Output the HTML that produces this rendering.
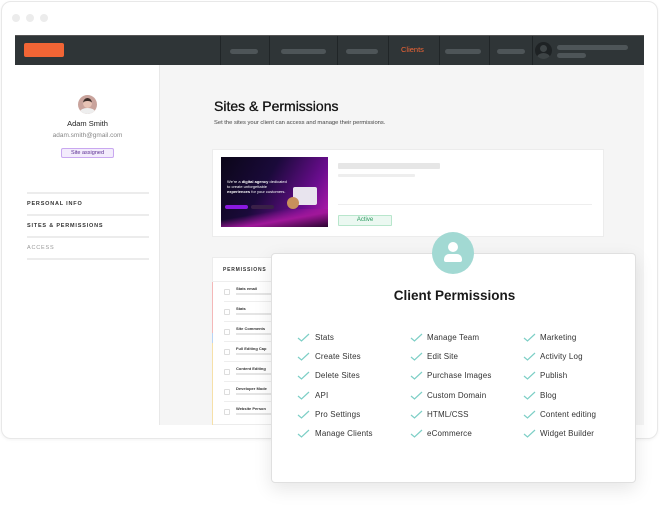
<!DOCTYPE html>
<html><head><meta charset="utf-8"><style>
*{margin:0;padding:0;box-sizing:border-box}
body{width:660px;height:507px;background:#fff;font-family:"Liberation Sans",sans-serif;position:relative;overflow:hidden}
.a{position:absolute}
.frame{left:1px;top:1px;width:657px;height:438px;border:1px solid #e8e8e8;border-radius:10px;background:#fff;box-shadow:0 1px 3px rgba(0,0,0,.05)}
.dot{width:8px;height:8px;border-radius:50%;background:#ececec;top:14px}
.nav{left:15px;top:35px;width:629px;height:30px;background:#2f3537;border-top:1px solid #555}
.sep{top:0;width:1px;height:30px;background:#202527}
.pill{height:5px;border-radius:3px;background:#4e5558;top:13px}
.side{left:15px;top:65px;width:145px;height:360px;background:#fff;border-right:1px solid #e8e8e8}
.main{left:160px;top:65px;width:484px;height:360px;background:#f5f5f5}
.hl{left:27px;width:122px;height:2px;background:#ececec}
.lab{left:27px;font-size:5.5px;font-weight:bold;letter-spacing:.8px;color:#333}
.card{background:#fff;border:1px solid #ececec}
.bar{background:#e6e6e6;border-radius:1px}
.pr{position:absolute;left:12px;width:50px;height:20px;border-bottom:1px solid #eee}
.pr i{position:absolute;left:0;top:7px;width:6px;height:6px;border:1px solid #ddd;border-radius:1px}
.pr b{position:absolute;left:12px;top:4px;font-size:4px;color:#333;white-space:nowrap}
.pr s{position:absolute;left:12px;top:11px;width:40px;height:2px;background:#e5e5e5}
.col{top:328px;font-size:8px;color:#333;line-height:19.2px;letter-spacing:.15px}
</style></head><body>
<div class="a frame"></div>
<div class="a dot" style="left:12px"></div>
<div class="a dot" style="left:26px"></div>
<div class="a dot" style="left:40px"></div>

<div class="a nav">
  <div class="a" style="left:9px;top:7px;width:40px;height:14px;background:#f26535;border-radius:2px"></div>
  <div class="a sep" style="left:205px"></div>
  <div class="a sep" style="left:254px"></div>
  <div class="a sep" style="left:322px"></div>
  <div class="a sep" style="left:373px"></div>
  <div class="a sep" style="left:424px"></div>
  <div class="a sep" style="left:474px"></div>
  <div class="a sep" style="left:517px"></div>
  <div class="a pill" style="left:215px;width:28px"></div>
  <div class="a pill" style="left:266px;width:45px"></div>
  <div class="a pill" style="left:331px;width:32px"></div>
  <div class="a" style="left:386px;top:9px;font-size:7.5px;color:#f26535">Clients</div>
  <div class="a pill" style="left:430px;width:36px"></div>
  <div class="a pill" style="left:482px;width:28px"></div>
  <div class="a" style="left:520px;top:6px;width:17px;height:17px;border-radius:50%;background:#1e2224;overflow:hidden">
    <div class="a" style="left:5px;top:3px;width:7px;height:7px;border-radius:50%;background:#3e4446"></div>
    <div class="a" style="left:2px;top:11px;width:13px;height:9px;border-radius:50%;background:#3e4446"></div>
  </div>
  <div class="a" style="left:542px;top:9px;width:71px;height:5px;border-radius:3px;background:#4e5558"></div>
  <div class="a" style="left:542px;top:17px;width:29px;height:5px;border-radius:3px;background:#4e5558"></div>
</div>

<div class="a side"></div>
<div class="a main"></div>

<div class="a" style="left:78px;top:95px;width:19px;height:19px;border-radius:50%;background:#c9a39c;overflow:hidden">
  <div class="a" style="left:5px;top:3px;width:9px;height:10px;border-radius:50%;background:#e7c2b4;border-top:3px solid #3a2c28"></div>
  <div class="a" style="left:2px;top:13px;width:15px;height:8px;border-radius:50%;background:#eee"></div>
</div>
<div class="a" style="left:15px;width:145px;top:119px;text-align:center;font-size:7.5px;color:#222">Adam Smith</div>
<div class="a" style="left:15px;width:145px;top:132px;text-align:center;font-size:6.5px;color:#888">adam.smith@gmail.com</div>
<div class="a" style="left:61px;top:148px;width:53px;height:10px;border:1px solid #c9a8f0;background:#f3ecfc;border-radius:2px;font-size:5.5px;color:#5a2c91;text-align:center;line-height:8px">Site assigned</div>
<div class="a hl" style="top:192px"></div>
<div class="a lab" style="top:201px">PERSONAL INFO</div>
<div class="a hl" style="top:214px"></div>
<div class="a lab" style="top:223px">SITES &amp; PERMISSIONS</div>
<div class="a hl" style="top:236px"></div>
<div class="a lab" style="top:245px;color:#999;font-weight:normal">ACCESS</div>
<div class="a hl" style="top:258px"></div>

<div class="a" style="left:214px;top:98px;font-size:14px;color:#111;-webkit-text-stroke:0.3px #111">Sites &amp; Permissions</div>
<div class="a" style="left:214px;top:120px;font-size:5.8px;color:#444">Set the sites your client can access and manage their permissions.</div>

<div class="a card" style="left:212px;top:149px;width:392px;height:88px"></div>
<div class="a" style="left:221px;top:157px;width:107px;height:70px;background:linear-gradient(120deg,#0b0618 0%,#1a0a3a 40%,#6a0d8e 75%,#c21fb0 100%);overflow:hidden">
  <div class="a" style="left:0;top:52px;width:107px;height:18px;background:linear-gradient(170deg,transparent 30%,#a0179a 60%,#2a0530 100%)"></div>
  <div class="a" style="left:6px;top:22px;font-size:4px;color:#fff;line-height:5px;width:60px">We're a <b>digital agency</b> dedicated to create unforgettable <b>experiences</b> for your customers.</div>
  <div class="a" style="left:4px;top:48px;width:23px;height:4px;background:#8a19e0;border-radius:2px"></div>
  <div class="a" style="left:30px;top:48px;width:23px;height:4px;background:#3a2048;border-radius:2px"></div>
  <div class="a" style="left:72px;top:30px;width:24px;height:18px;background:#e8e4ee;border-radius:2px"></div>
  <div class="a" style="left:66px;top:40px;width:12px;height:12px;border-radius:50%;background:#c8905c"></div>
</div>
<div class="a bar" style="left:338px;top:163px;width:102px;height:6px"></div>
<div class="a bar" style="left:338px;top:174px;width:77px;height:3px;background:#eee"></div>
<div class="a" style="left:338px;top:204px;width:254px;height:1px;background:#eee"></div>
<div class="a" style="left:338px;top:215px;width:54px;height:11px;border:1px solid #b8e6cc;background:#ebf8f1;border-radius:1px;font-size:6px;color:#2a9a5e;text-align:center;line-height:9px">Active</div>

<div class="a card" style="left:212px;top:257px;width:70px;height:168px;border-right:none"></div>
<div class="a" style="left:223px;top:267px;font-size:5px;font-weight:bold;letter-spacing:.8px;color:#333">PERMISSIONS</div>
<div class="a" style="left:212px;top:281px;width:70px;height:1px;background:#eee"></div>
<div class="a" style="left:212px;top:282px;width:1px;height:51px;background:#f4b8b8"></div>
<div class="a" style="left:212px;top:333px;width:1px;height:10px;background:#b8d4f4"></div>
<div class="a" style="left:212px;top:343px;width:1px;height:82px;background:#f6e0a8"></div>
<div class="a" style="left:212px;top:282px;width:70px;height:143px">
  <div class="pr" style="top:0"><i></i><b>Stats email</b><s></s></div>
  <div class="pr" style="top:20px"><i></i><b>Stats</b><s></s></div>
  <div class="pr" style="top:40px"><i></i><b>Site Comments</b><s></s></div>
  <div class="pr" style="top:60px"><i></i><b>Full Editing Cap</b><s></s></div>
  <div class="pr" style="top:80px"><i></i><b>Content Editing</b><s></s></div>
  <div class="pr" style="top:100px"><i></i><b>Developer Mode</b><s></s></div>
  <div class="pr" style="top:120px;border:none"><i></i><b>Website Person</b><s></s></div>
</div>

<div class="a" style="left:271px;top:253px;width:365px;height:230px;background:#fff;border:1px solid #e0e0e0;border-radius:4px;box-shadow:0 6px 18px rgba(0,0,0,.1)">
  <div class="a" style="left:160px;top:-22px;width:42px;height:42px;border-radius:50%;background:#a2d9d3">
    <div class="a" style="left:16px;top:10px;width:10px;height:10px;border-radius:50%;background:#fff"></div>
    <div class="a" style="left:12px;top:22px;width:18px;height:8px;border-radius:5px 5px 2px 2px;background:#fff"></div>
  </div>
  <div class="a" style="left:0;width:365px;top:34px;text-align:center;font-size:13.5px;font-weight:bold;color:#1a1a1a">Client Permissions</div>
</div>
<svg class="a" style="left:0;top:0" width="660" height="507">
<defs><path id="c" d="M0 4 L3.5 7 L11 0" fill="none" stroke="#7dcfc6" stroke-width="1.2"/></defs>
<use href="#c" x="298" y="334"/><use href="#c" x="298" y="353"/><use href="#c" x="298" y="372"/><use href="#c" x="298" y="392"/><use href="#c" x="298" y="411"/><use href="#c" x="298" y="430"/>
<use href="#c" x="411" y="334"/><use href="#c" x="411" y="353"/><use href="#c" x="411" y="372"/><use href="#c" x="411" y="392"/><use href="#c" x="411" y="411"/><use href="#c" x="411" y="430"/>
<use href="#c" x="524" y="334"/><use href="#c" x="524" y="353"/><use href="#c" x="524" y="372"/><use href="#c" x="524" y="392"/><use href="#c" x="524" y="411"/><use href="#c" x="524" y="430"/>
</svg>
<div class="a col" style="left:315px">Stats<br>Create Sites<br>Delete Sites<br>API<br>Pro Settings<br>Manage Clients</div>
<div class="a col" style="left:427px">Manage Team<br>Edit Site<br>Purchase Images<br>Custom Domain<br>HTML/CSS<br>eCommerce</div>
<div class="a col" style="left:540px">Marketing<br>Activity Log<br>Publish<br>Blog<br>Content editing<br>Widget Builder</div>
</body></html>
